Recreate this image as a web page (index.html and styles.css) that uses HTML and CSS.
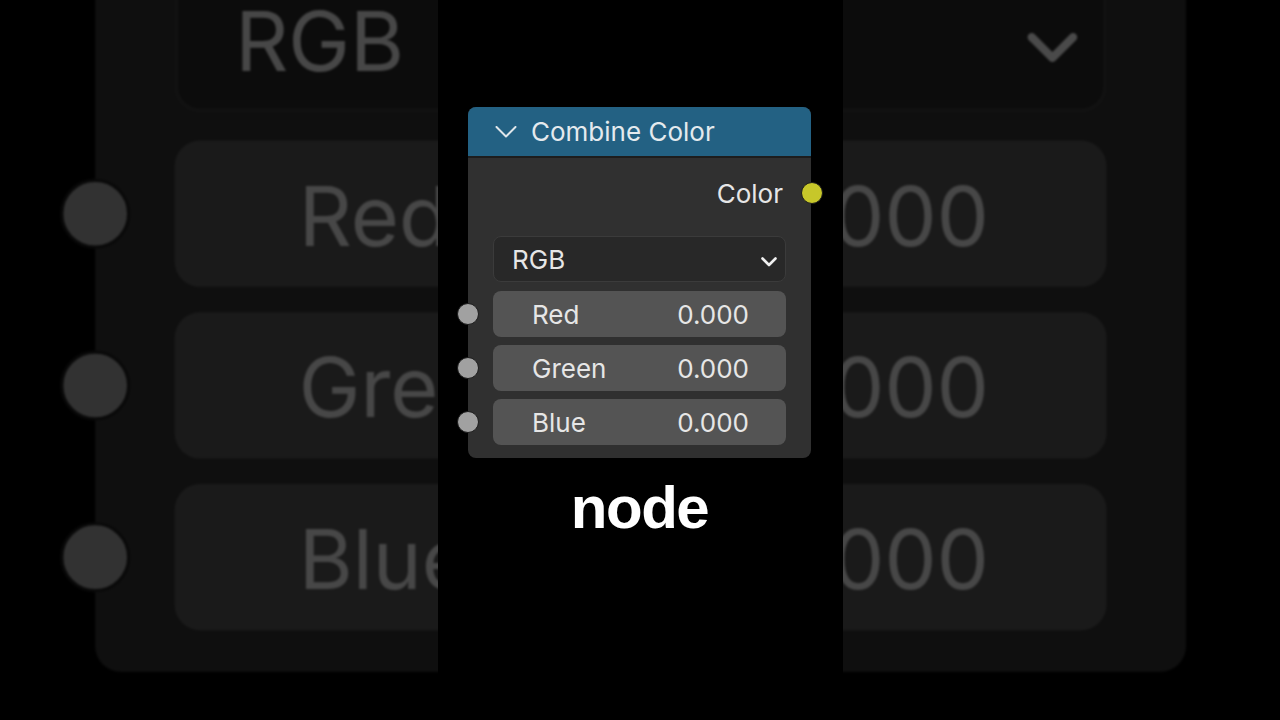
FILE: index.html
```html
<!DOCTYPE html>
<html lang="en">
<head>
<meta charset="utf-8">
<title>Combine Color node</title>
<link rel="stylesheet" href="styles.css">
</head>
<body>
<div class="screen">
  <div class="bg" aria-hidden="true">
    <div class="bg-scale">
      <div class="col">
        <div class="node">
          <div class="head">
            <svg class="chev" width="22" height="12" viewBox="0 0 22 12"><polyline points="1.5,1 11,10.5 20.5,1" fill="none" stroke="#dfe6ea" stroke-width="2" stroke-linecap="round" stroke-linejoin="round"/></svg>
            <span class="title">Combine Color</span>
          </div>
          <div class="out-row"><span>Color</span><span class="sock sock-out"></span></div>
          <div class="dropdown"><span>RGB</span>
            <svg width="16" height="10" viewBox="0 0 16 10"><polyline points="1.5,1.5 8,8 14.5,1.5" fill="none" stroke="#f0f0f0" stroke-width="2.6" stroke-linecap="round" stroke-linejoin="round"/></svg>
          </div>
          <div class="fields">
            <div class="field"><span class="sock sock-in"></span><span>Red</span><span>0.000</span></div>
            <div class="field"><span class="sock sock-in"></span><span>Green</span><span>0.000</span></div>
            <div class="field"><span class="sock sock-in"></span><span>Blue</span><span>0.000</span></div>
          </div>
        </div>
      </div>
    </div>
  </div>
  <div class="strip">
    <div class="col">
      <div class="node">
        <div class="head">
          <svg class="chev" width="22" height="12" viewBox="0 0 22 12"><polyline points="1.5,1 11,10.5 20.5,1" fill="none" stroke="#dfe6ea" stroke-width="2" stroke-linecap="round" stroke-linejoin="round"/></svg>
          <span class="title">Combine Color</span>
        </div>
        <div class="out-row"><span>Color</span><span class="sock sock-out"></span></div>
        <div class="dropdown"><span>RGB</span>
          <svg width="16" height="10" viewBox="0 0 16 10"><polyline points="1.5,1.5 8,8 14.5,1.5" fill="none" stroke="#f0f0f0" stroke-width="2.6" stroke-linecap="round" stroke-linejoin="round"/></svg>
        </div>
        <div class="fields">
          <div class="field"><span class="sock sock-in"></span><span>Red</span><span>0.000</span></div>
          <div class="field"><span class="sock sock-in"></span><span>Green</span><span>0.000</span></div>
          <div class="field"><span class="sock sock-in"></span><span>Blue</span><span>0.000</span></div>
        </div>
      </div>
      <div class="caption">node</div>
    </div>
  </div>
</div>
</body>
</html>
```

FILE: styles.css
```css
html, body {
  margin: 0;
  padding: 0;
  background: #000;
}

.screen {
  position: relative;
  width: 1280px;
  height: 720px;
  overflow: hidden;
  display: flex;
  justify-content: center;
  background: #000;
}

.bg {
  position: absolute;
  inset: 0;
  filter: brightness(0.31) blur(1px);
}

.bg-scale {
  width: 100%;
  height: 100%;
  display: flex;
  justify-content: center;
  transform: scale(3.18);
  transform-origin: 639px 360px;
}

.strip {
  position: relative;
  width: 405px;
  height: 720px;
  background: #000;
}

.col {
  width: 405px;
  padding-top: 107px;
  display: flex;
  flex-direction: column;
  align-items: center;
}

.node {
  position: relative;
  width: 343px;
  margin-left: -1px;
  background: #303030;
  border-radius: 8px;
  padding-bottom: 13px;
  font-family: Inter, "Noto Sans", sans-serif;
  font-size: 26px;
  color: #e6e6e6;
}

.head {
  height: 49px;
  background: #236183;
  border-radius: 8px 8px 0 0;
  border-bottom: 2px solid #1d1d1d;
  display: flex;
  align-items: center;
  padding-left: 27px;
  gap: 14px;
}

.chev {
  display: block;
  flex: none;
}

.title {
  color: #e4eaee;
}

.out-row {
  position: relative;
  height: 70px;
  display: flex;
  justify-content: flex-end;
  align-items: center;
  padding-right: 28px;
}

.dropdown {
  margin: 8px 25px 0;
  height: 46px;
  box-sizing: border-box;
  border: 1px solid #3b3b3b;
  background: #282828;
  border-radius: 8px;
  padding: 0 8px 0 18px;
  display: flex;
  justify-content: space-between;
  align-items: center;
}

.dropdown svg {
  display: block;
  margin-top: 5px;
}

.fields {
  display: flex;
  flex-direction: column;
  gap: 8px;
  margin: 9px 25px 0;
}

.field {
  position: relative;
  height: 46px;
  background: #545454;
  border-radius: 8px;
  display: flex;
  justify-content: space-between;
  align-items: center;
  padding: 0 37px 0 39px;
}

.sock {
  position: absolute;
  top: 50%;
  width: 20px;
  height: 20px;
  margin-top: -11.5px;
  border: 1.5px solid #1c1c1c;
  border-radius: 50%;
}

.sock-in {
  left: -36.5px;
  background: #a1a1a1;
}

.sock-out {
  right: -11.5px;
  background: #c7c72a;
}

.caption {
  margin-top: 20px;
  margin-left: -1px;
  font-family: "Liberation Sans", Arial, sans-serif;
  font-weight: bold;
  font-size: 60px;
  line-height: 60px;
  letter-spacing: -1.5px;
  color: #fff;
}
```
